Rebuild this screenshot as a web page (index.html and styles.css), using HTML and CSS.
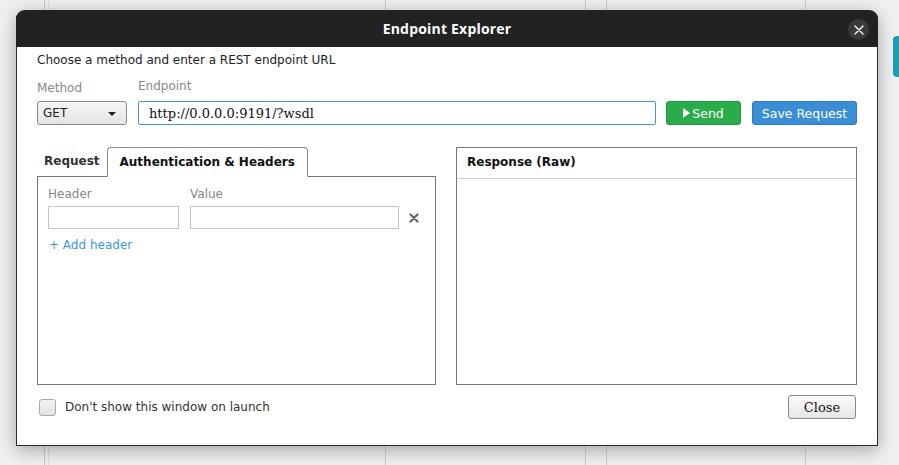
FILE: index.html
```
<!DOCTYPE html>
<html>
<head>
<meta charset="utf-8">
<link rel="stylesheet" href="styles.css">
</head>
<body>
<div class="desktop">
  <div class="col col-a"></div>
  <div class="col col-b"></div>
  <div class="col col-c"></div>
  <div class="col col-d"></div>
  <div class="col col-e"></div>
  <div class="col col-f"></div>
</div>
<div class="teal-tab"></div>

<div class="dialog">
  <div class="titlebar">
    <span class="title">Endpoint Explorer</span>
    <span class="close-x">
      <svg width="10" height="10" viewBox="0 0 10 10"><path d="M1 1L9 9M9 1L1 9" stroke="#fff" stroke-width="1.4" stroke-linecap="round"/></svg>
    </span>
  </div>
  <div class="body">
    <p class="intro">Choose a method and enter a REST endpoint URL</p>
    <div class="req-row">
      <div class="field method">
        <span class="label label-method">Method</span>
        <div class="select">GET<span class="caret"></span></div>
      </div>
      <div class="field endpoint">
        <span class="label">Endpoint</span>
        <div class="url">http://0.0.0.0:9191/?wsdl</div>
      </div>
      <div class="btn btn-send"><span class="play"></span>Send</div>
      <div class="btn btn-save">Save Request</div>
    </div>
    <div class="panels">
      <div class="left">
        <div class="tabs">
          <span class="tab">Request</span>
          <span class="tab active">Authentication &amp; Headers</span>
        </div>
        <div class="tabbox">
          <div class="hdr-labels">
            <span class="label hcol">Header</span>
            <span class="label">Value</span>
          </div>
          <div class="hdr-row">
            <div class="inp inp-h"></div>
            <div class="inp inp-v"></div>
            <svg class="del" width="10" height="10" viewBox="0 0 10 10"><path d="M1.5 1.5L8.5 8.5M8.5 1.5L1.5 8.5" stroke="#666" stroke-width="2.2" stroke-linecap="round"/></svg>
          </div>
          <div class="add">+ Add header</div>
        </div>
      </div>
      <div class="right">
        <div class="resp-head">Response (Raw)</div>
      </div>
    </div>
    <div class="footer">
      <label class="chk"><span class="box"></span>Don't show this window on launch</label>
      <div class="btn-close">Close</div>
    </div>
  </div>
</div>
</body>
</html>
```

FILE: styles.css
```
html, body {
  margin: 0;
  padding: 0;
}
body {
  width: 899px;
  height: 465px;
  overflow: hidden;
  background: #eff0f2;
  font-family: "DejaVu Sans", sans-serif;
  font-size: 12px;
  position: relative;
}
.desktop {
  position: absolute;
  inset: 0;
  display: flex;
}
.col { height: 100%; }
.col-a { width: 44px; border-right: 1px solid #c8c9cc; }
.col-b { width: 3px; border-right: 1px solid #dcdde0; }
.col-c { width: 336px; border-right: 1px solid #cfd0d4; }
.col-d { width: 199px; border-right: 1px solid #cfd0d4; }
.col-e { width: 20px; border-right: 1px solid #cfd0d4; }
.col-f { width: 198px; border-right: 1px solid #cfd0d4; }

.teal-tab {
  position: absolute;
  left: 893px;
  top: 36px;
  width: 12px;
  height: 41px;
  border-radius: 4px;
  background: #1aa0b4;
}

.dialog {
  position: absolute;
  left: 16px;
  top: 10px;
  width: 862px;
  height: 436px;
  box-sizing: border-box;
  background: #fff;
  border: 1px solid #2a2a2a;
  border-top: none;
  border-radius: 9px 9px 0 0;
  box-shadow: 0 4px 18px rgba(0,0,0,0.32);
  display: flex;
  flex-direction: column;
}
.titlebar {
  height: 37px;
  background: #222;
  border-radius: 9px 9px 0 0;
  margin: 0 -1px;
  display: flex;
  align-items: center;
  justify-content: center;
  position: relative;
}
.title {
  color: #fff;
  font-family: "Open Sans", sans-serif;
  font-weight: 700;
  font-size: 14px;
  letter-spacing: 0.2px;
  margin-left: 0;
}
.close-x {
  position: absolute;
  right: 9px;
  top: 9px;
  width: 21px;
  height: 21px;
  border-radius: 50%;
  background: #3a3a3a;
  display: flex;
  align-items: center;
  justify-content: center;
}

.body {
  flex: 1;
  padding: 5px 20px 0 20px;
  display: flex;
  flex-direction: column;
}
.intro {
  margin: 0;
  line-height: 16px;
  color: #222;
}
.req-row {
  display: flex;
  align-items: flex-end;
  margin-top: 10px;
}
.field { display: flex; flex-direction: column; }
.label {
  color: #888;
  line-height: 16px;
}
.label-method { padding-top: 2px; }
.field .label { margin-bottom: 7px; }
.field .label-method { margin-bottom: 5px; }
.method { width: 90px; margin-right: 11px; }
.select {
  height: 24px;
  box-sizing: border-box;
  border: 1px solid #8a8a8a;
  border-radius: 3px;
  background: linear-gradient(#f6f6f6, #e4e4e4);
  display: flex;
  align-items: center;
  padding-left: 5px;
  color: #222;
  position: relative;
}
.caret {
  position: absolute;
  right: 10px;
  top: 10px;
  width: 0;
  height: 0;
  border-left: 4px solid transparent;
  border-right: 4px solid transparent;
  border-top: 4px solid #222;
}
.endpoint { width: 518px; margin-right: 10px; }
.url {
  height: 24px;
  box-sizing: border-box;
  border: 1px solid #4a90d9;
  border-radius: 2px;
  font-family: "DejaVu Serif", serif;
  font-size: 13px;
  color: #111;
  display: flex;
  align-items: center;
  padding-left: 10px;
}
.btn {
  height: 24px;
  box-sizing: border-box;
  border-radius: 3px;
  color: #fff;
  display: flex;
  align-items: center;
  justify-content: center;
  font-size: 12.5px;
}
.btn-send {
  width: 75px;
  background: #2bac4a;
  border: 1px solid #24943f;
  margin-right: 11px;
}
.play {
  width: 0;
  height: 0;
  border-top: 5px solid transparent;
  border-bottom: 5px solid transparent;
  border-left: 7px solid #fff;
  margin-right: 2px;
}
.btn-save {
  width: 105px;
  background: #3a8ed6;
  border: 1px solid #2f7cc0;
}

.panels {
  display: flex;
  margin-top: 22px;
  height: 238px;
}
.left {
  width: 400px;
  display: flex;
  flex-direction: column;
}
.tabs {
  display: flex;
  align-items: flex-end;
  height: 29px;
  position: relative;
  z-index: 1;
}
.tab {
  font-weight: 700;
  color: #333;
  padding: 0 7px;
  line-height: 16px;
  margin-bottom: 7px;
}
.tab.active {
  color: #111;
  margin-bottom: -1px;
  padding: 6px 12px 6px 12px;
  border: 1px solid #888;
  border-bottom: 1px solid #fff;
  border-radius: 4px 4px 0 0;
  background: #fff;
}
.tabbox {
  flex: 1;
  border: 1px solid #777;
  padding: 9px 10px 8px 10px;
}
.hdr-labels { display: flex; }
.hcol { width: 142px; }
.hdr-row {
  display: flex;
  align-items: center;
  margin-top: 4px;
}
.inp {
  height: 23px;
  box-sizing: border-box;
  border: 1px solid #c6c6c6;
}
.inp-h { width: 131px; margin-right: 11px; }
.inp-v { width: 209px; margin-right: 10px; }
.add {
  color: #3d9ad6;
  margin-top: 8px;
  padding-left: 1px;
  line-height: 16px;
}

.right {
  margin-left: 20px;
  width: 402px;
  box-sizing: border-box;
  border: 1px solid #777;
}
.resp-head {
  height: 31px;
  box-sizing: border-box;
  border-bottom: 1px solid #ccc;
  font-weight: 700;
  color: #111;
  padding-left: 10px;
  padding-bottom: 2px;
  display: flex;
  align-items: center;
}

.footer {
  display: flex;
  align-items: center;
  justify-content: space-between;
  margin-top: 10px;
  height: 24px;
}
.chk {
  display: flex;
  align-items: center;
  color: #333;
  font-size: 12px;
}
.box {
  width: 17px;
  height: 17px;
  box-sizing: border-box;
  margin-left: 2px;
  margin-right: 9px;
  border: 1px solid #aaa;
  border-radius: 3px;
  background: linear-gradient(#f4f4f4, #e2e2e2);
}
.btn-close {
  width: 68px;
  height: 24px;
  box-sizing: border-box;
  border: 1px solid #8a8a8a;
  border-radius: 3px;
  background: linear-gradient(#fafafa, #e6e6e6);
  font-family: "DejaVu Serif", serif;
  font-size: 13px;
  color: #111;
  display: flex;
  align-items: center;
  justify-content: center;
  margin-right: 1px;
}
```
